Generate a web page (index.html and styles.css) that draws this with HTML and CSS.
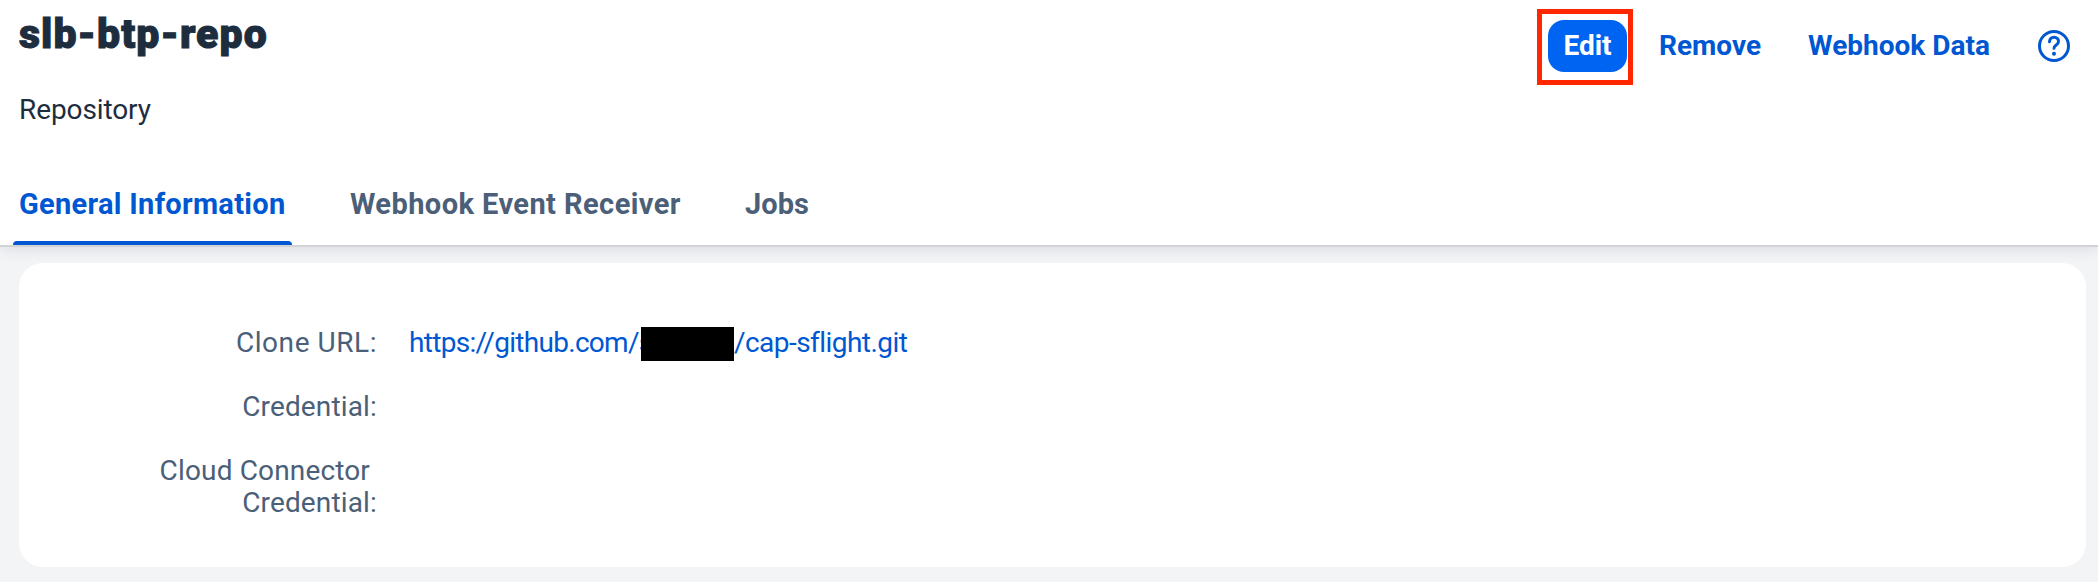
FILE: index.html
```
<!DOCTYPE html>
<html lang="en">
<head>
<meta charset="utf-8">
<title>slb-btp-repo</title>
<link rel="stylesheet" href="styles.css">
</head>
<body>
<header class="header">
  <div class="heading">
    <h1 class="title">slb-btp-repo</h1>
    <p class="subtitle">Repository</p>
  </div>
  <div class="actions">
    <div class="highlight"><button class="btn btn-primary">Edit</button></div>
    <button class="btn btn-remove">Remove</button>
    <button class="btn btn-webhook">Webhook Data</button>
    <button class="btn btn-help" aria-label="Help">
      <svg width="32" height="32" viewBox="0 0 32 32" fill="none" stroke="currentColor" stroke-width="3">
        <circle cx="16" cy="16" r="14.5"/>
        <path d="M11.500 11.700c.1-2.700 2-4.500 4.600-4.500 2.500 0 4.400 1.700 4.400 4.200 0 3.700-4.500 3.400-4.500 6.900" stroke-linecap="round" stroke-linejoin="round"/>
        <circle cx="16" cy="23.800" r="2" fill="currentColor" stroke="none"/>
      </svg>
    </button>
  </div>
</header>
<nav class="tabs">
  <a class="tab tab-active">General Information</a>
  <a class="tab tab-receiver">Webhook Event Receiver</a>
  <a class="tab tab-jobs">Jobs</a>
</nav>
<main class="content">
  <section class="card">
    <dl class="form">
      <dt class="label label-url">Clone URL:</dt>
      <dd class="value"><a class="link"><span class="link-host">https://github.com/s</span><span class="redacted"></span><span class="link-repo">/cap-sflight.git</span></a></dd>
      <dt class="label">Credential:</dt>
      <dd class="value"></dd>
      <dt class="label"><span class="line-first">Cloud Connector</span><br>Credential:</dt>
      <dd class="value"></dd>
    </dl>
  </section>
</main>
</body>
</html>
```
FILE: styles.css
```
* { box-sizing: border-box; }
body {
  margin: 0;
  height: 582px;
  overflow: hidden;
  display: flex;
  flex-direction: column;
  background: #f3f4f6;
  color: #1d2d3e;
  font: 28px/32px Roboto, "Liberation Sans", sans-serif;
}
.header {
  display: flex;
  justify-content: space-between;
  height: 169px;
  padding: 9px 28px 0 19px;
  background: #fff;
}
.title {
  margin: 1px 0 0;
  font-size: 41px;
  line-height: 48px;
  font-weight: 900;
  letter-spacing: 1.05px;
  -webkit-text-stroke: 1px currentColor;
}
.subtitle { margin: 36px 0 0; letter-spacing: -.1px; }
.actions { display: flex; align-items: flex-start; color: #0057d2; }
.highlight { width: 96px; height: 76px; padding: 6px; border: 5px solid #ff2600; }
.btn {
  height: 52px;
  margin: 11px 0 0;
  padding: 0;
  border: 0;
  background: none;
  color: inherit;
  font: 700 28px/32px Roboto, "Liberation Sans", sans-serif;
  white-space: nowrap;
}
.btn-primary { width: 79px; margin: 0; border-radius: 16px; background: #0064f2; color: #fff; }
.btn-remove { width: 102px; margin-left: 26px; }
.btn-webhook { width: 184px; margin-left: 46px; }
.btn-help { width: 32px; height: 32px; margin: 21px 0 0 47px; }
.btn-help svg { display: block; }
.tabs {
  display: flex;
  flex: none;
  height: 78px;
  padding-left: 13px;
  border-bottom: 2px solid #d2d3d4;
  background: #fff;
  box-shadow: 0 2px 14px rgba(34, 53, 72, .12);
  clip-path: inset(0 0 -24px 0);
  color: #4b6078;
  font-size: 29px;
  font-weight: 700;
}
.tab { height: 76px; padding-top: 19px; white-space: nowrap; }
.tab-active {
  display: flex;
  flex-direction: column;
  justify-content: space-between;
  width: 279px;
  padding-left: 6px;
  color: #0057d2;
  letter-spacing: .3px;
}
.tab-active::after {
  content: "";
  height: 4px;
  margin-left: -6px;
  border-radius: 4px 4px 0 0;
  background: currentColor;
}
.tab-receiver { width: 395px; margin-left: 58px; letter-spacing: .43px; }
.tab-jobs { letter-spacing: .05px; }
.content { padding: 16px 12px 15px 19px; }
.card { height: 304px; padding-top: 64px; border-radius: 24px; background: #fff; }
.form { display: grid; grid-template-columns: 358px 1fr; gap: 32px 32px; margin: 0; }
.label { color: #4b6078; text-align: right; letter-spacing: .15px; }
.label-url { letter-spacing: .55px; }
.line-first { margin-right: 7px; }
.value { margin: 0; }
.link { display: flex; height: 32px; color: #0057d2; }
.link-host { letter-spacing: -.7px; }
.link-repo { letter-spacing: -.55px; }
.redacted { position: relative; width: 93px; height: 34px; margin-left: -11.600px; background: #000; }
```
